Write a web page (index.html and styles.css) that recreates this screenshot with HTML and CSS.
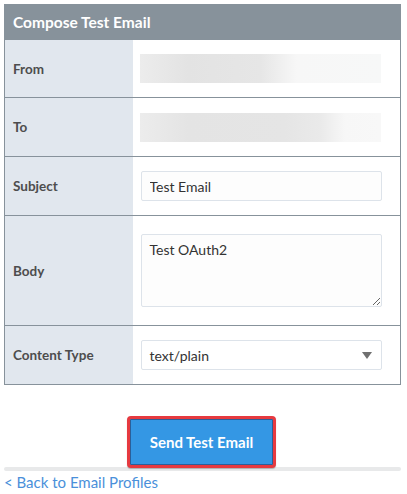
FILE: index.html
```
<!DOCTYPE html>
<html>
<head>
<meta charset="utf-8">
<link rel="stylesheet" href="styles.css">
</head>
<body>
<div class="page">
  <table class="compose">
    <thead>
      <tr><th colspan="2" class="title">Compose Test Email</th></tr>
    </thead>
    <tbody>
      <tr class="row row-first">
        <td class="label">From</td>
        <td class="value"><div class="blur blur-a"></div></td>
      </tr>
      <tr class="row">
        <td class="label">To</td>
        <td class="value"><div class="blur blur-b"></div></td>
      </tr>
      <tr class="row">
        <td class="label">Subject</td>
        <td class="value"><input class="field" type="text" value="Test Email"></td>
      </tr>
      <tr class="row row-body">
        <td class="label">Body</td>
        <td class="value"><textarea class="field area">Test OAuth2</textarea></td>
      </tr>
      <tr class="row">
        <td class="label">Content Type</td>
        <td class="value">
          <div class="select">
            <span>text/plain</span>
            <span class="caret"></span>
          </div>
        </td>
      </tr>
    </tbody>
  </table>
  <div class="actions">
    <button class="send">Send Test Email</button>
  </div>
  <div class="bar"></div>
  <a class="back" href="#">&lt; Back to Email Profiles</a>
</div>
</body>
</html>
```
FILE: styles.css
```
html, body {
  margin: 0;
  padding: 0;
  background: #fff;
}
body {
  font-family: "Lato", "Open Sans", sans-serif;
  color: #333;
}
.page {
  padding: 4px 6px 0 4px;
}
.compose {
  width: 397px;
  border-collapse: collapse;
  border: 1px solid #87929b;
}
.title {
  background: #87929b;
  color: #fff;
  text-align: left;
  font-size: 15.5px;
  font-weight: 700;
  height: 35px;
  padding: 0 0 0 8px;
  box-sizing: border-box;
}
.row td {
  border-top: 1px solid #87929b;
  height: 59px;
  padding: 0;
  box-sizing: border-box;
}
.row-first td {
  height: 58px;
}
.row-body td {
  height: 110px;
}
.label {
  width: 128px;
  background: #e1e7ee;
  padding-left: 8px !important;
  font-size: 13.5px;
  font-weight: 700;
  color: #4d4d4d;
}
.value {
  padding-left: 7px !important;
}
.blur {
  width: 241px;
  height: 29px;
}
.blur-a {
  background: linear-gradient(90deg, #ececec 0%, #e3e3e3 20%, #e6e6e6 50%, #f7f7f7 65%, #f7f8f8 100%);
}
.blur-b {
  background: linear-gradient(90deg, #ececec 0%, #e4e4e4 20%, #e5e5e5 60%, #eaeaea 75%, #f7f7f7 85%, #f8f8f8 100%);
}
.field {
  display: block;
  width: 241px;
  height: 30px;
  box-sizing: border-box;
  border: 1px solid #dde3ea;
  border-radius: 2px;
  background: #fdfdfd;
  font-family: "Lato", "Open Sans", sans-serif;
  font-size: 14px;
  color: #333;
  padding: 0 8px;
  margin: 0 0 0 1px;
}
.area {
  height: 73px;
  padding: 6px 8px;
  resize: both;
  margin-top: -1px;
}
.select {
  width: 241px;
  height: 30px;
  box-sizing: border-box;
  margin-left: 1px;
  border: 1px solid #dde3ea;
  border-radius: 2px;
  background: #fff;
  display: flex;
  align-items: center;
  justify-content: space-between;
  padding: 0 9px 0 8px;
  font-size: 14px;
  color: #333;
}
.caret {
  width: 0;
  height: 0;
  border-left: 5px solid transparent;
  border-right: 5px solid transparent;
  border-top: 7px solid #707070;
}
.actions {
  display: flex;
  justify-content: center;
  margin-top: 31px;
  margin-bottom: -1px;
  padding-right: 2px;
  position: relative;
  z-index: 1;
}
.send {
  width: 149px;
  height: 52px;
  box-sizing: border-box;
  border: 3px solid #e63a40;
  border-radius: 4px;
  background: #3497e4;
  box-shadow: inset 0 0 0 1px #2a5f9a, 0 1px 1px rgba(0,0,0,0.25);
  color: #fff;
  font-family: "Lato", "Open Sans", sans-serif;
  font-size: 15px;
  font-weight: 700;
  padding: 0;
}
.bar {
  width: 397px;
  height: 4px;
  border-radius: 2px;
  background: #e8e9ea;
}
.back {
  display: block;
  margin-top: 2px;
  font-size: 15px;
  color: #4a90da;
  text-decoration: none;
}
```
